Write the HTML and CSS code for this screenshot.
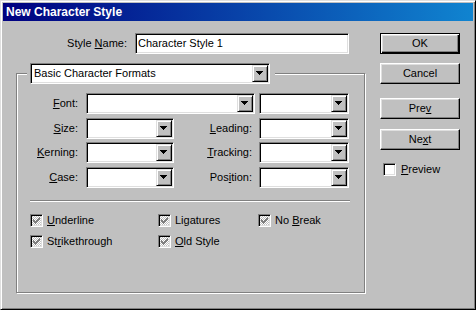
FILE: index.html
```html
<!DOCTYPE html>
<html>
<head>
<meta charset="utf-8">
<title>New Character Style</title>
<link rel="stylesheet" href="styles.css">
</head>
<body>
<div class="dialog">
  <div class="titlebar">New Character Style</div>
  <div class="main">
    <div class="left">
      <div class="name-row">
        <span class="name-label">Style <span class="ak">N</span>ame:</span>
        <div class="field name-input">Character Style 1</div>
      </div>
      <fieldset class="group">
        <legend class="group-legend">
          <div class="field combo legend-combo"><span class="combo-text">Basic Character Formats</span><span class="dd"></span></div>
        </legend>
        <div class="form-grid">
          <span class="lbl"><span class="ak">F</span>ont:</span>
          <div class="field combo font-combo"><span class="combo-text"></span><span class="dd"></span></div>
          <div class="field combo"><span class="combo-text"></span><span class="dd"></span></div>

          <span class="lbl"><span class="ak">S</span>ize:</span>
          <div class="field combo"><span class="combo-text"></span><span class="dd"></span></div>
          <span class="lbl lbl-right"><span class="ak">L</span>eading:</span>
          <div class="field combo"><span class="combo-text"></span><span class="dd"></span></div>

          <span class="lbl"><span class="ak">K</span>erning:</span>
          <div class="field combo"><span class="combo-text"></span><span class="dd"></span></div>
          <span class="lbl lbl-right"><span class="ak">T</span>racking:</span>
          <div class="field combo"><span class="combo-text"></span><span class="dd"></span></div>

          <span class="lbl"><span class="ak">C</span>ase:</span>
          <div class="field combo"><span class="combo-text"></span><span class="dd"></span></div>
          <span class="lbl lbl-right">Pos<span class="ak">i</span>tion:</span>
          <div class="field combo"><span class="combo-text"></span><span class="dd"></span></div>
        </div>
        <div class="sep"></div>
        <div class="checks">
          <div class="check"><span class="box disabled"><svg class="tick" width="7" height="7" viewBox="0 0 7 7"><path d="M0 2h1v1h1v1h1v-1h1v-1h1v-1h1v-1h1v3h-1v1h-1v1h-1v1h-1v1h-1v-1h-1v-1h-1z"/></svg></span><span><span class="ak">U</span>nderline</span></div>
          <div class="check"><span class="box disabled"><svg class="tick" width="7" height="7" viewBox="0 0 7 7"><path d="M0 2h1v1h1v1h1v-1h1v-1h1v-1h1v-1h1v3h-1v1h-1v1h-1v1h-1v1h-1v-1h-1v-1h-1z"/></svg></span><span>Li<span class="ak">g</span>atures</span></div>
          <div class="check"><span class="box disabled"><svg class="tick" width="7" height="7" viewBox="0 0 7 7"><path d="M0 2h1v1h1v1h1v-1h1v-1h1v-1h1v-1h1v3h-1v1h-1v1h-1v1h-1v1h-1v-1h-1v-1h-1z"/></svg></span><span>No <span class="ak">B</span>reak</span></div>
          <div class="check"><span class="box disabled"><svg class="tick" width="7" height="7" viewBox="0 0 7 7"><path d="M0 2h1v1h1v1h1v-1h1v-1h1v-1h1v-1h1v3h-1v1h-1v1h-1v1h-1v1h-1v-1h-1v-1h-1z"/></svg></span><span>St<span class="ak">r</span>ikethrough</span></div>
          <div class="check"><span class="box disabled"><svg class="tick" width="7" height="7" viewBox="0 0 7 7"><path d="M0 2h1v1h1v1h1v-1h1v-1h1v-1h1v-1h1v3h-1v1h-1v1h-1v1h-1v1h-1v-1h-1v-1h-1z"/></svg></span><span><span class="ak">O</span>ld Style</span></div>
        </div>
      </fieldset>
    </div>
    <div class="right">
      <button class="btn default">OK</button>
      <button class="btn cancel">Cancel</button>
      <button class="btn prev">Pre<span class="ak">v</span></button>
      <button class="btn next">Ne<span class="ak">x</span>t</button>
      <div class="check preview"><span class="box"></span><span><span class="ak">P</span>review</span></div>
    </div>
  </div>
</div>
</body>
</html>
```
FILE: styles.css
```css
* {
  box-sizing: border-box;
}

html,
body {
  margin: 0;
  padding: 0;
}

body {
  background: #c0c0c0;
  color: #000;
  font: 11px/13px "Liberation Sans", Arial, sans-serif;
}

.ak {
  text-decoration: underline;
}

.dialog {
  width: 476px;
  height: 310px;
  padding: 2px;
  background: #c0c0c0;
  border: 1px solid;
  border-color: #dfdfdf #000 #000 #dfdfdf;
  box-shadow: inset 1px 1px #fff, inset -1px -1px #808080;
  display: flex;
  flex-direction: column;
}

.titlebar {
  height: 18px;
  padding-left: 3px;
  background: linear-gradient(to right, #000080, #1084d0);
  color: #fff;
  font-weight: bold;
  font-size: 12px;
  line-height: 18px;
  white-space: nowrap;
}

.main {
  display: flex;
  gap: 15px;
  padding: 12px 0 0 13px;
}

.left {
  width: 349px;
  flex: none;
}

.name-row {
  display: flex;
  align-items: center;
  gap: 8px;
  height: 21px;
}

.name-label {
  width: 111px;
  text-align: right;
}

/* sunken white field */
.field {
  height: 21px;
  background: #fff;
  border: 1px solid;
  border-color: #808080 #fff #fff #808080;
  box-shadow: inset 1px 1px #000, inset -1px -1px #dfdfdf;
}

.name-input {
  width: 214px;
  padding: 1px 2px;
  line-height: 17px;
  white-space: nowrap;
}

.combo {
  display: flex;
  padding: 1px;
}

.combo-text {
  flex: 1;
  padding-left: 2px;
  line-height: 17px;
  white-space: nowrap;
  overflow: hidden;
}

.dd {
  flex: none;
  width: 16px;
  height: 17px;
  padding: 5px 0 0 3px;
  background: #c0c0c0;
  border: 1px solid;
  border-color: #dfdfdf #000 #000 #dfdfdf;
  box-shadow: inset 1px 1px #fff, inset -1px -1px #808080;
}

.dd::after {
  content: "";
  display: block;
  width: 7px;
  height: 4px;
  background:
    linear-gradient(#000, #000) 0 0 / 7px 1px no-repeat,
    linear-gradient(#000, #000) 1px 1px / 5px 1px no-repeat,
    linear-gradient(#000, #000) 2px 2px / 3px 1px no-repeat,
    linear-gradient(#000, #000) 3px 3px / 1px 1px no-repeat;
}

/* etched group box */
.group {
  width: 349px;
  min-width: 0;
  margin: 9px 0 0;
  padding: 9px 15px 44px 0;
  border: 1px solid #808080;
  box-shadow: 1px 1px 0 #fff, inset 1px 1px 0 #fff;
}

.group-legend {
  margin-left: 10px;
  padding: 0 5px 0 3px;
  background: #c0c0c0;
}

.legend-combo {
  width: 240px;
}

.form-grid {
  display: grid;
  grid-template-columns: 69px 88px 85px 90px;
  grid-template-rows: 25px 24px 25px 21px;
  align-items: start;
}

.lbl {
  height: 21px;
  line-height: 21px;
  padding-right: 8px;
  text-align: right;
  white-space: nowrap;
}

.lbl-right {
  padding-right: 7px;
}

.font-combo {
  grid-column: 2 / 4;
  margin-right: 4px;
}

.sep {
  width: 320px;
  margin: 12px 0 0 13px;
  border-top: 1px solid #808080;
  border-bottom: 1px solid #fff;
}

.checks {
  display: grid;
  grid-template-columns: 128px 100px auto;
  row-gap: 8px;
  margin: 12px 0 0 13px;
}

.check {
  display: flex;
  align-items: center;
  gap: 4px;
  height: 13px;
  white-space: nowrap;
}

.box {
  flex: none;
  width: 13px;
  height: 13px;
  display: flex;
  align-items: center;
  justify-content: center;
  background: #fff;
  border: 1px solid;
  border-color: #808080 #fff #fff #808080;
  box-shadow: inset 1px 1px #000, inset -1px -1px #dfdfdf;
}

.box.disabled {
  background: repeating-conic-gradient(#fff 0 25%, #c0c0c0 0 50%) 0 0 / 2px 2px;
}

.tick {
  display: block;
  fill: #808080;
  shape-rendering: crispEdges;
}

/* right button column */
.right {
  width: 80px;
  flex: none;
  display: flex;
  flex-direction: column;
}

.btn {
  width: 80px;
  height: 21px;
  padding: 0;
  margin: 0;
  font: inherit;
  color: #000;
  background: #c0c0c0;
  border: 1px solid;
  border-color: #fff #000 #000 #fff;
  box-shadow: inset -1px -1px #808080, inset 1px 1px #dfdfdf;
  display: flex;
  align-items: center;
  justify-content: center;
}

.btn.default {
  border-color: #000;
  box-shadow: inset 1px 1px #fff, inset -1px -1px #000, inset -2px -2px #808080, inset 2px 2px #dfdfdf;
}

.cancel {
  margin-top: 9px;
}

.prev {
  margin-top: 14px;
}

.next {
  margin-top: 10px;
}

.preview {
  margin: 13px 0 0 3px;
  gap: 5px;
}
```
